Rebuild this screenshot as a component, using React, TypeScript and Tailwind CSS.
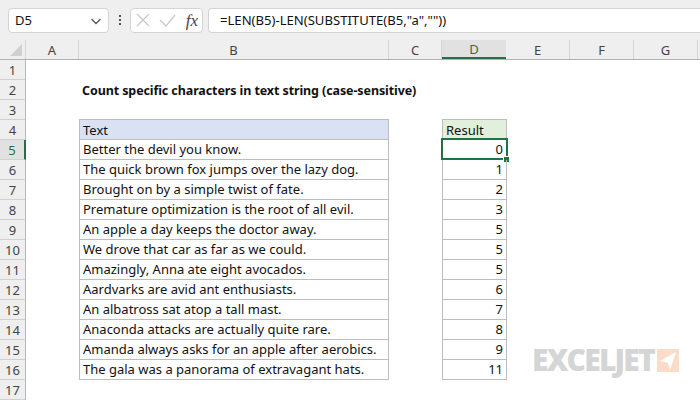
const rows: [string, string][] = [
  ["Better the devil you know.", "0"],
  ["The quick brown fox jumps over the lazy dog.", "1"],
  ["Brought on by a simple twist of fate.", "2"],
  ["Premature optimization is the root of all evil.", "3"],
  ["An apple a day keeps the doctor away.", "5"],
  ["We drove that car as far as we could.", "5"],
  ["Amazingly, Anna ate eight avocados.", "5"],
  ["Aardvarks are avid ant enthusiasts.", "6"],
  ["An albatross sat atop a tall mast.", "7"],
  ["Anaconda attacks are actually quite rare.", "8"],
  ["Amanda always asks for an apple after aerobics.", "9"],
  ["The gala was a panorama of extravagant hats.", "11"],
];

function RowHead({ n, active }: { n: number; active?: boolean }) {
  return (
    <div
      className={`flex h-5 w-[26px] shrink-0 items-center justify-center border-b border-b-[#d0d0d0] pt-[2px] text-[13px] ${
        active
          ? "border-r-2 border-r-[#217346] bg-[#e1e1e1] text-[#217346]"
          : "border-r border-r-[#b8b8b8] bg-[#efefef] text-[#444]"
      }`}
    >
      {n}
    </div>
  );
}

function ColHead({ label, w, active }: { label: string; w: string; active?: boolean }) {
  return (
    <div
      className={`flex h-full shrink-0 items-center justify-center pt-[2px] text-[13px] ${w} ${
        active
          ? "border-b-2 border-b-[#217346] bg-[#e1e1e1] text-[#217346]"
          : "border-r border-r-[#d4d4d4] text-[#444]"
      }`}
    >
      {label}
    </div>
  );
}

function Blank({ n }: { n: number }) {
  return (
    <div className="flex h-5">
      <RowHead n={n} />
    </div>
  );
}

export default function App() {
  return (
    <div className="relative h-[400px] w-[700px] overflow-hidden bg-white font-['Noto_Sans',sans-serif] text-[13px] text-[#111]">
      <div className="flex h-10 items-center gap-[5px] bg-[#efefef] pl-2 pr-0">
        <div className="flex h-[25px] w-[101px] items-center justify-between rounded-[4px] border border-[#d4d4d4] bg-white pl-[6px] pr-[6px] pt-[1px] text-[13px]">
          <span>D5</span>
          <svg width="12" height="12" viewBox="0 0 12 12" fill="none" stroke="#555" strokeWidth="1.3">
            <path d="M1.5 4 6 8.5 10.5 4" />
          </svg>
        </div>
        <div className="flex w-[11px] flex-col items-center gap-[2px]">
          <span className="h-[2px] w-[2px] bg-[#555]" />
          <span className="h-[2px] w-[2px] bg-[#555]" />
          <span className="h-[2px] w-[2px] bg-[#555]" />
        </div>
        <div className="flex h-[25px] w-[73px] items-center justify-between rounded-[4px] border border-[#d4d4d4] bg-white pl-[5px] pr-[4px]">
          <svg width="14" height="14" viewBox="0 0 14 14" fill="none" stroke="#c8c8c8" strokeWidth="1.2">
            <path d="M1 1 13 13M13 1 1 13" />
          </svg>
          <svg width="17" height="14" viewBox="0 0 17 14" fill="none" stroke="#c8c8c8" strokeWidth="1.2">
            <path d="M1 7 7 13 16 2" />
          </svg>
          <span className="font-['Liberation_Serif',serif] text-[17px] italic leading-none text-[#444]">fx</span>
        </div>
        <div className="flex h-[25px] flex-1 items-center rounded-l-[4px] border border-r-0 border-[#d4d4d4] bg-white pl-[11px] pt-[1px] text-[13.1px]">
          =LEN(B5)-LEN(SUBSTITUTE(B5,"a",""))
        </div>
      </div>

      <div className="flex h-5 border-b border-[#b0b0b0] bg-[#efefef]">
        <div className="flex h-full w-[26px] shrink-0 items-end justify-end border-r border-[#d4d4d4] pb-[3px] pr-[3px]">
          <div className="h-0 w-0 border-b-[12px] border-l-[12px] border-b-[#d0d0d0] border-l-transparent" />
        </div>
        <ColHead label="A" w="w-[53px]" />
        <ColHead label="B" w="w-[310px]" />
        <ColHead label="C" w="w-[53px]" />
        <ColHead label="D" w="w-[64px]" active />
        <ColHead label="E" w="w-[64px]" />
        <ColHead label="F" w="w-[64px]" />
        <ColHead label="G" w="w-[64px]" />
      </div>

      <Blank n={1} />
      <div className="flex h-5">
        <RowHead n={2} />
        <div className="ml-[56px] flex items-center pt-[2px] text-[12.5px] font-bold leading-none tracking-[-0.1px]">
          Count specific characters in text string (case-sensitive)
        </div>
      </div>
      <Blank n={3} />
      <div className="flex h-5">
        <RowHead n={4} />
        <div className="ml-[53px] -mt-[1px] flex h-[21px] w-[310px] items-center border border-[#bdbdbd] bg-[#d9e1f2] pl-[3px] pt-[2px]">Text</div>
        <div className="ml-[53px] -mt-[1px] flex h-[21px] w-[65px] items-center border border-[#bdbdbd] bg-[#e2efda] pl-[3px] pt-[2px]">Result</div>
      </div>
      {rows.map(([text, res], i) => (
        <div className="flex h-5" key={i}>
          <RowHead n={i + 5} active={i === 0} />
          <div className="ml-[53px] flex h-5 w-[310px] items-center border border-t-0 border-[#bdbdbd] pl-[3px] pt-[1px]">
            {text}
          </div>
          <div className="relative ml-[53px] flex h-5 w-[65px] items-center justify-end border border-t-0 border-[#bdbdbd] pr-[3px] pt-[1px]">
            {res}
            {i === 0 && (
              <>
                <div className="absolute -left-[2px] -top-[2px] h-[22px] w-[67px] border-2 border-[#217346]" />
                <div className="absolute -bottom-[4px] -right-[4px] h-[7px] w-[7px] border border-white bg-[#217346]" />
              </>
            )}
          </div>
        </div>
      ))}
      <Blank n={17} />

      <div className="absolute left-[532px] top-[349px] flex items-start gap-[3px]">
        <span className="block h-[22px] font-['Open_Sans',sans-serif] text-[30px] font-extrabold leading-[22px] tracking-[-1.8px] text-[#d4d5d5]">
          EXCELJET
        </span>
        <svg width="22" height="23" viewBox="0 0 22 23">
          <rect width="22" height="23" fill="#fbdcc6" />
          <path d="M19 3 3 12 11 14 13 21Z" fill="#fff" />
        </svg>
      </div>
    </div>
  );
}
